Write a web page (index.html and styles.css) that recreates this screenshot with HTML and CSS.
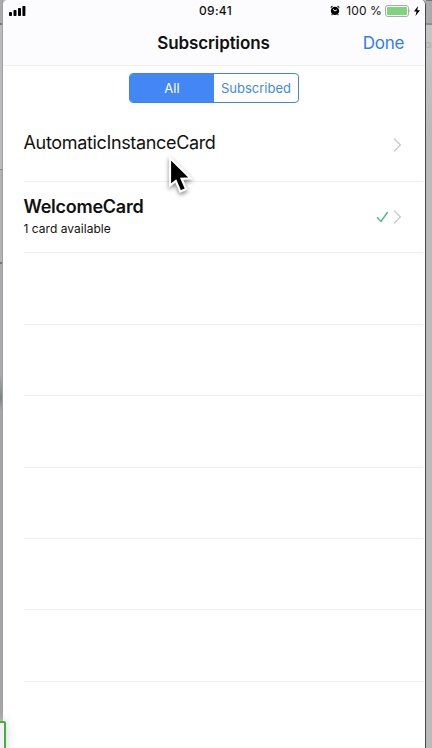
FILE: index.html
```html
<!DOCTYPE html>
<html lang="en">
<head>
<meta charset="utf-8">
<title>Subscriptions</title>
<link rel="stylesheet" href="styles.css">
</head>
<body>
<main class="phone">
  <header class="header">
    <div class="status">
      <svg class="signal" width="17" height="12" viewBox="0 0 17 12"><rect x="0" y="7" width="3" height="4" rx=".8"/><rect x="4.5" y="5" width="3" height="6" rx=".8"/><rect x="9" y="3" width="3" height="8" rx=".8"/><rect x="13.4" y="1" width="3" height="10" rx=".8"/></svg>
      <span class="time">09:41</span>
      <div class="power">
        <svg class="alarm" width="10" height="11" viewBox="0 0 10 11"><circle cx="5" cy="5.9" r="4.2"/><path class="ears" d="M.7 2.6 2.5 1M9.3 2.6 7.5 1M2.4 9.2l-.8.9M7.6 9.2l.8.9"/><path class="hands" d="M3 4.2 5 6.1l1.9-1.3"/></svg>
        <span class="percent">100 %</span>
        <svg class="battery" width="26" height="12" viewBox="0 0 26 12"><rect class="case" x=".5" y=".5" width="23" height="11" rx="2.5"/><rect class="charge" x="2" y="2" width="20" height="8" rx="1"/><path class="tip" d="M24.5 4q1.5 2 0 4z"/></svg>
        <svg class="bolt" width="6" height="10" viewBox="0 0 6 10"><path d="M4 0 0 5.5h2.5L1.5 10 6 4.2H3.3z"/></svg>
      </div>
    </div>
    <div class="nav">
      <h1 class="title">Subscriptions</h1>
      <span class="done">Done</span>
    </div>
  </header>
  <div class="segments"><span class="segment selected">All</span><span class="segment">Subscribed</span></div>
  <section class="list">
    <div class="row first">
      <div class="label"><div class="name">AutomaticInstanceCard</div></div>
      <svg class="chevron" width="9" height="14" viewBox="0 0 9 14"><path d="m1 .7 6.5 6.3L1 13.3"/></svg>
    </div>
    <div class="row welcome">
      <div class="label"><div class="name bold">WelcomeCard</div><div class="detail">1 card available</div></div>
      <svg class="check" width="13" height="12" viewBox="0 0 13 12"><path d="m1 6.2 4 4.2L11.7 1"/></svg>
      <svg class="chevron" width="9" height="14" viewBox="0 0 9 14"><path d="m1 .7 6.5 6.3L1 13.3"/></svg>
    </div>
    <div class="row"></div>
    <div class="row"></div>
    <div class="row"></div>
    <div class="row"></div>
    <div class="row"></div>
    <div class="row"></div>
  </section>
</main>
<div class="side-left"></div>
<div class="side-right"><span class="behind">or</span></div>
<div class="corner"></div>
<svg class="pointer" width="34" height="46" viewBox="0 0 34 46"><path d="M5 5v27.500l5.800-4.600 4.500 10.700 5.800-2.500-4.500-10.300 8.900-.5z"/></svg>
</body>
</html>
```
FILE: styles.css
```css
* { box-sizing: border-box; }
body {
  margin: 0;
  height: 748px;
  overflow: hidden;
  position: relative;
  background: #bbbabb;
  color: #111;
  font-family: Inter, "Liberation Sans", sans-serif;
}
.phone {
  margin-left: 3px;
  width: 423px;
  height: 748px;
  background: #fff;
  border-right: 1px solid #47474d;
  border-radius: 5px 5px 0 0;
  overflow: hidden;
}
.header {
  height: 66px;
  background: #fcfcfe;
  border-bottom: 1px solid #f0f0f1;
}
.status {
  height: 21px;
  display: grid;
  grid-template-columns: 1fr auto 1fr;
  align-items: center;
  padding: 0 5px 0 6px;
}
.time { font-size: 12px; font-weight: 500; letter-spacing: .35px; margin-left: 2px; }
.power { display: flex; align-items: center; justify-content: flex-end; }
.percent { font-size: 12px; letter-spacing: .1px; margin: 0 3px 0 6px; }
.ears { fill: none; stroke: #111; stroke-width: 1.1; }
.hands { fill: none; stroke: #fff; stroke-width: 1; }
.case { fill: #fff; stroke: #aaa; }
.charge { fill: #7dd67c; }
.tip { fill: #aaa; }
.bolt { margin-left: 3px; }
.nav {
  height: 43px;
  display: grid;
  grid-template-columns: 1fr auto 1fr;
  align-items: center;
  padding-right: 21px;
}
.title {
  grid-column: 2;
  margin: 0 0 0 20px;
  font-size: 17px;
  font-weight: 600;
  letter-spacing: -.1px;
}
.done { justify-self: end; color: #2f7ef0; font-size: 17px; letter-spacing: -.3px; }
.segments {
  display: flex;
  width: 170px;
  height: 30px;
  margin: 7px 0 0 126px;
  border: 1px solid #4284d9;
  border-radius: 4px;
  overflow: hidden;
}
.segment {
  flex: 1;
  display: flex;
  align-items: center;
  justify-content: center;
  color: #4288ec;
  font-size: 13px;
}
.selected { background: #4287f4; color: #fff; }
.list { margin: 7px 2px 0 20.5px; }
.row {
  height: 71.4px;
  display: flex;
  align-items: center;
  border-bottom: 1px solid #efeff0;
  padding-right: 21.5px;
}
.first { height: 72px; }
.label { flex: 1; }
.name { font-size: 18px; line-height: 22px; letter-spacing: -.34px; }
.first .name { margin-bottom: 5px; }
.first .chevron { margin-bottom: 1px; }
.name.bold { font-weight: 600; letter-spacing: -.25px; }
.welcome .label { margin-bottom: 2px; }
.detail { font-size: 12px; line-height: 15px; margin-top: 3px; letter-spacing: .03px; }
.chevron path { fill: none; stroke: #c7c7cc; stroke-width: 1.2; }
.check { margin-right: 4px; }
.check path { fill: none; stroke: #41b883; stroke-width: 1.3; }
.side-left {
  position: absolute;
  left: 0;
  top: 0;
  width: 3px;
  height: 748px;
  border-right: 1px solid #a0a0a2;
  background: linear-gradient(#aaa 0 23px, #777 23px 25px, #bbb 25px 169px, #888 169px 170px, #b2b2b6 170px 262px, #777 262px 264px, #aaa 264px 375px, #7d8487 398px, #a5a5a7 410px);
}
.side-right {
  position: absolute;
  left: 426px;
  top: 0;
  width: 6px;
  height: 748px;
  overflow: hidden;
  background: linear-gradient(#777 0 1px, #aaa 1px 23px, #8c8c8c 23px 25px, #c6c6c6 25px, #bbbabb 130px);
}
.behind { position: absolute; left: -1px; top: 38px; font-size: 10px; color: #aaa; }
.corner {
  position: absolute;
  left: -6px;
  top: 721px;
  width: 12px;
  height: 36px;
  border: 2px solid #48ad35;
  border-radius: 2px;
  background: #f0f2f7;
  box-shadow: 0 0 10px #ccd0e0;
}
.pointer { position: absolute; left: 165px; top: 153px; filter: drop-shadow(0 2px 2px #0007); }
.pointer path { fill: #000; stroke: #fff; stroke-width: 2.2; }
```
